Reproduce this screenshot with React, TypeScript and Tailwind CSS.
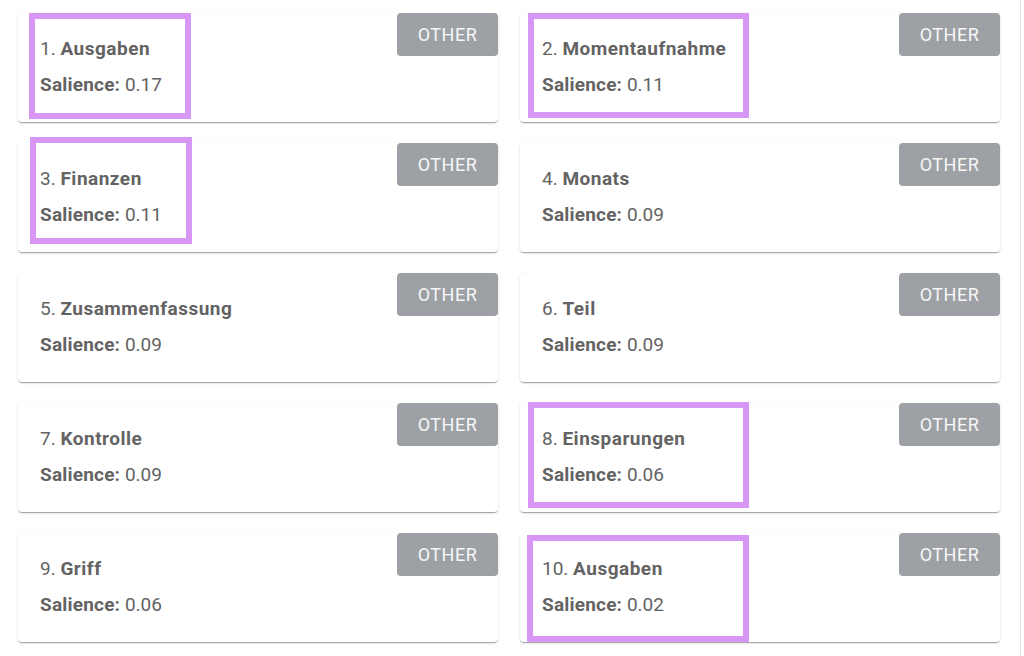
import React from "react";

type Item = {
  n: number;
  word: string;
  sal: string;
  box?: { l: number; t: number; w: number; h: number };
};

const items: Item[] = [
  { n: 1, word: "Ausgaben", sal: "0.17", box: { l: 11, t: 0, w: 162, h: 106 } },
  { n: 2, word: "Momentaufnahme", sal: "0.11", box: { l: 8, t: 0, w: 221, h: 105 } },
  { n: 3, word: "Finanzen", sal: "0.11", box: { l: 12, t: -6, w: 162, h: 107 } },
  { n: 4, word: "Monats", sal: "0.09" },
  { n: 5, word: "Zusammenfassung", sal: "0.09" },
  { n: 6, word: "Teil", sal: "0.09" },
  { n: 7, word: "Kontrolle", sal: "0.09" },
  { n: 8, word: "Einsparungen", sal: "0.06", box: { l: 8, t: -1, w: 221, h: 106 } },
  { n: 9, word: "Griff", sal: "0.06" },
  { n: 10, word: "Ausgaben", sal: "0.02", box: { l: 7, t: 2, w: 222, h: 107 } },
];

function Card({ item }: { item: Item }) {
  return (
    <div className="relative h-[109px] rounded-[4px] bg-white shadow-[0_2px_1px_-1px_rgba(0,0,0,0.2),0_1px_1px_0_rgba(0,0,0,0.14),0_1px_3px_0_rgba(0,0,0,0.12)]">
      <div className="flex flex-col gap-[12px] pl-[22px] pt-[24px] text-[19px] leading-[24px] text-[#636363]">
        <div>
          {item.n}. <span className="font-bold tracking-[0.5px]">{item.word}</span>
        </div>
        <div>
          <span className="font-bold tracking-[0.2px]">Salience:</span> {item.sal}
        </div>
      </div>
      <div className="absolute right-0 top-0 flex h-[43px] w-[101px] items-center justify-center rounded-[4px] bg-[#9da0a4] text-[18px] leading-none tracking-[0.5px] text-[#f7f7f7]">
        OTHER
      </div>
      {item.box && (
        <div
          className="pointer-events-none absolute border-[6px] border-[#d997f5]"
          style={{ left: item.box.l, top: item.box.t, width: item.box.w, height: item.box.h }}
        />
      )}
    </div>
  );
}

export default function App() {
  return (
    <div
      className="h-[656px] w-[1024px] overflow-hidden bg-white"
      style={{ fontFamily: "Roboto, 'Liberation Sans', sans-serif" }}
    >
      <div className="h-full w-[1021px] border-r border-[#e6e6e6]">
        <div className="grid grid-cols-[480px_480px] gap-x-[22px] gap-y-[21px] pl-[18px] pt-[13px]">
          {items.map((it) => (
            <Card key={it.n} item={it} />
          ))}
        </div>
      </div>
    </div>
  );
}
